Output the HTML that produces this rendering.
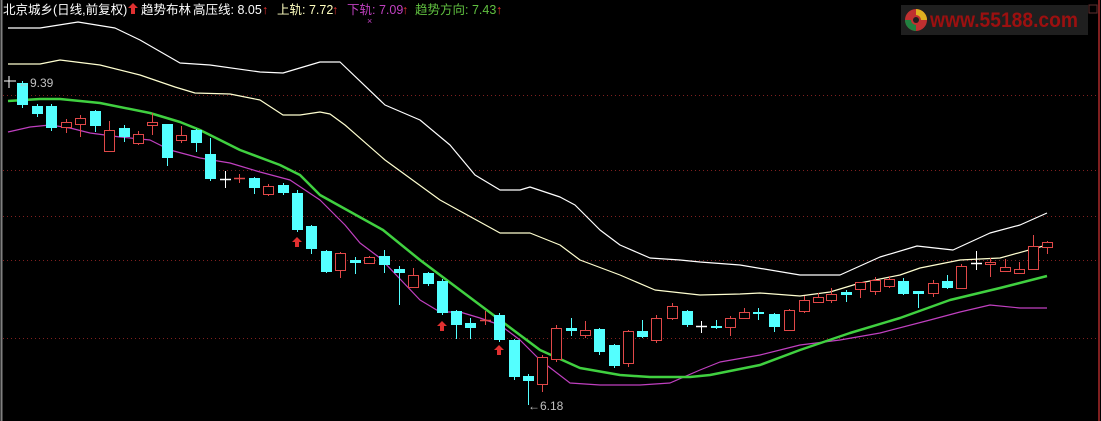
<!DOCTYPE html>
<html><head><meta charset="utf-8"><style>
html,body{margin:0;padding:0;background:#000;width:1101px;height:421px;overflow:hidden}
svg{display:block}
text{font-family:"Liberation Sans","Noto Sans CJK SC",sans-serif}
</style></head><body>
<svg id="s" width="1101" height="421" xmlns="http://www.w3.org/2000/svg">
<rect width="1101" height="421" fill="#000"/>
<line x1="1.5" y1="0" x2="1.5" y2="421" stroke="#808080" stroke-width="2"/>
<line x1="1099" y1="0" x2="1099" y2="421" stroke="#802020" stroke-width="2"/>
<g stroke="#802020" stroke-width="1" stroke-dasharray="1,3">
<line x1="3" y1="95.5" x2="1097" y2="95.5"/>
<line x1="3" y1="170.5" x2="1097" y2="170.5"/>
<line x1="3" y1="216.5" x2="1097" y2="216.5"/>
<line x1="3" y1="260.5" x2="1097" y2="260.5"/>
<line x1="3" y1="338.5" x2="1097" y2="338.5"/>
</g>
<!-- logo -->
<rect x="901" y="5" width="187" height="30" fill="#1f1f1f"/>
<circle cx="916" cy="20" r="11" fill="#c03030"/>
<path d="M916 9 A11 11 0 0 1 927 20 L921 20 A5 5 0 0 0 916 15Z" fill="#e0b020"/>
<path d="M905 20 A11 11 0 0 0 916 31 L916 25 A5 5 0 0 1 911 20Z" fill="#208040"/>
<circle cx="916" cy="20" r="3" fill="#1f1f1f"/>
<text x="930" y="27" font-size="21" font-weight="bold" fill="#9c1010" textLength="148" lengthAdjust="spacingAndGlyphs">www.55188.com</text>
<rect x="1089" y="5" width="8" height="8" fill="none" stroke="#603030"/>
<!-- bands -->
<g fill="none" stroke-linejoin="round">
<polyline stroke="#ffffff" stroke-width="1.2" points="8,28 40,28 78,22 115,28 140,40 180,63 210,65 260,72 283,73 320,62 340,62 385,105 420,120 450,145 475,175 500,190 520,190 530,187 560,197 575,205 600,230 620,245 650,258 680,260 700,262 740,265 800,275 840,275 880,257 917,246 953,250 990,233 1020,225 1047,213"/>
<polyline stroke="#ffffd0" stroke-width="1.2" points="8,64 40,64 60,60 100,65 140,75 175,87 195,93 230,94 260,100 283,115 300,115 320,112 330,114 345,125 385,160 440,200 500,233 530,233 560,245 580,260 620,275 655,290 700,295 740,294 760,293 800,296 830,292 860,283 900,275 920,268 960,260 1000,258 1047,245"/>
<polyline stroke="#c040c0" stroke-width="1.2" points="8,132 30,127 50,125 70,128 90,133 120,137 150,140 170,150 200,158 230,163 260,172 290,180 320,200 345,225 360,243 380,258 420,300 440,312 460,312 480,318 500,325 520,340 540,360 570,383 600,385 640,385 670,383 700,370 720,362 760,355 800,345 840,340 880,333 930,320 960,312 990,305 1020,308 1047,308"/>
<polyline stroke="#40d040" stroke-width="2.5" points="8,101 40,99 60,99 100,103 150,113 180,122 200,130 240,150 280,165 300,175 320,195 383,230 420,260 460,290 500,320 540,350 580,368 620,375 650,377 690,377 710,375 760,365 800,350 850,333 900,318 950,300 1000,288 1047,276"/>
</g>
<g id="c"></g>
<!-- arrows -->
<g fill="#e03030">
<path d="M297 237 l5 5 h-3 v5 h-4 v-5 h-3z"/>
<path d="M442 321 l5 5 h-3 v5 h-4 v-5 h-3z"/>
<path d="M499 345 l5 5 h-3 v5 h-4 v-5 h-3z"/>
<path d="M133 3 l5 5 h-3 v6 h-4 v-6 h-3z"/>
</g>
<!-- labels -->
<text x="18" y="87" font-size="12" fill="#c0c0c0">←9.39</text>
<line x1="4" y1="81" x2="16" y2="81" stroke="#fff"/><line x1="9" y1="76" x2="9" y2="88" stroke="#fff"/>
<text x="528" y="410" font-size="12" fill="#c0c0c0">←6.18</text>
<g font-size="12.5">
<text x="3" y="14" fill="#ffffff">北京城乡(日线,前复权)</text>
<text x="141" y="14" fill="#ffffff">趋势布林</text>
<text x="193" y="14" fill="#ffffff">高压线: 8.05</text>
<text x="262" y="14" fill="#e03030">↑</text>
<text x="277" y="14" fill="#ffffc0">上轨: 7.72</text>
<text x="332" y="14" fill="#e03030">↑</text>
<text x="347" y="14" fill="#c040c0">下轨: 7.09</text>
<text x="402" y="14" fill="#e03030">↑</text>
<text x="415" y="14" fill="#60c040">趋势方向: 7.43</text>
<text x="496" y="14" fill="#e03030">↑</text>
<text x="367" y="24" font-size="9" fill="#c040c0">×</text>
</g>
</svg>
<script>
var d=[
[22,'c',83,105,81,108],[37,'c',106,114,104,117],[51,'c',106,128,104,131],[66,'r',122,127,119,133],[80,'r',118,124,115,137],
[95,'c',111,126,110,132],[109,'r',130,151,121,151],[124,'c',128,137,125,142],[138,'r',134,143,131,145],[152,'r',122,125,113,135],
[167,'c',124,158,124,166],[181,'r',135,140,126,143],[196,'c',130,143,129,152],[210,'c',154,179,138,181],[225,'w',179,179,171,188],
[239,'r',178,178,174,183],[254,'c',178,188,177,194],[268,'r',186,194,184,196],[283,'c',185,193,183,195],[297,'c',193,230,190,232],
[311,'c',226,249,225,254],[326,'c',251,272,250,273],[340,'r',253,270,252,278],[355,'c',261,262,257,274],[369,'r',257,263,256,264],
[384,'c',256,265,250,273],[399,'c',269,273,266,305],[413,'r',275,287,268,287],[428,'c',273,284,272,286],[442,'c',281,313,279,315],
[456,'c',311,325,310,339],[470,'c',323,328,318,339],[485,'r',320,320,311,325],[499,'c',315,340,313,342],[514,'c',340,377,339,380],
[528,'c',376,381,374,405],[542,'r',357,384,355,392],[556,'r',328,359,325,362],[571,'c',329,330,318,336],[585,'r',330,335,321,338],
[599,'c',329,352,328,355],[614,'c',345,366,344,368],[628,'r',331,363,330,367],[642,'c',331,337,320,338],[656,'r',318,340,315,343],
[672,'r',306,318,303,320],[687,'c',311,325,310,327],[701,'w',326,326,321,333],[716,'c',326,328,320,329],[730,'r',318,327,316,336],
[744,'r',312,318,308,319],[758,'c',312,314,308,320],[774,'c',314,327,313,332],[789,'r',310,330,309,331],[804,'r',300,311,296,313],
[818,'r',297,302,293,303],[831,'r',294,300,288,303],[846,'c',293,294,290,302],[860,'r',282,289,282,298],[875,'r',280,291,277,295],
[889,'r',279,286,276,288],[903,'c',281,294,278,295],[918,'c',292,293,291,308],[933,'r',283,293,280,297],[947,'c',281,288,275,289],
[961,'r',266,288,264,289],[976,'w',263,263,251,270],[990,'r',262,264,258,277],[1005,'r',267,271,259,272],[1019,'r',269,273,262,274],
[1033,'r',246,269,235,270],[1047,'r',242,247,241,254]];
var g=document.getElementById('c'),h='';
d.forEach(function(k){var x=k[0],t=k[1],a=k[2],b=k[3],hi=k[4],lo=k[5];
var col=t=='c'?'#54ffff':t=='r'?'#e04848':'#ffffff';
h+='<line x1="'+(x+.5)+'" y1="'+hi+'" x2="'+(x+.5)+'" y2="'+lo+'" stroke="'+col+'"/>';
if(b-a<2){h+='<line x1="'+(x-5)+'" y1="'+(a+.5)+'" x2="'+(x+6)+'" y2="'+(a+.5)+'" stroke="'+col+'" stroke-width="'+(t=='c'?3:1.5)+'"/>';}
else if(t=='c'){h+='<rect x="'+(x-5)+'" y="'+a+'" width="11" height="'+(b-a)+'" fill="'+col+'"/>';}
else{h+='<rect x="'+(x-4.5)+'" y="'+(a+.5)+'" width="10" height="'+(b-a)+'" fill="#000" stroke="'+col+'"/>';}
});
g.innerHTML=h;
</script>
</body></html>
